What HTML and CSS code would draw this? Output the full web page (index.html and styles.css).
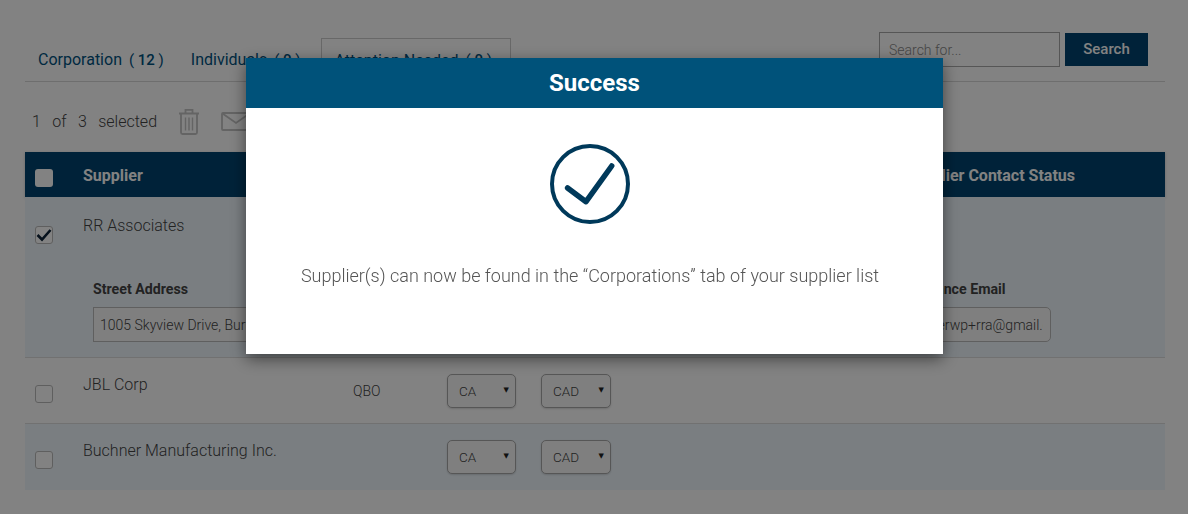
FILE: index.html
```html
<!DOCTYPE html>
<html lang="en">

<head>
    <meta charset="UTF-8">
    <meta name="viewport" content="width=device-width, initial-scale=1.0">
    <title>Suppliers</title>
    <link rel="stylesheet" href="styles.css">
</head>

<body>
    <div class="page">
        <div class="toolbar">
            <div class="tabs">
                <a class="tab">Corporation <span class="count">( <b>12</b> )</span></a>
                <a class="tab tab-second">Individuals <span class="count">( <b>0</b> )</span></a>
                <a class="tab tab-active">Attention Needed <span class="count">( <b>0</b> )</span></a>
            </div>
            <form class="search">
                <input type="text" class="search-input" placeholder="Search for...">
                <button type="button" class="search-btn">Search</button>
            </form>
        </div>

        <div class="selection">
            <span class="selection-text">1 of 3 selected</span>
            <svg class="icon-trash" width="22" height="27" viewBox="0 0 22 27" fill="none" stroke="#c4c4c4" stroke-width="1.800">
                <path d="M1 5.500h20M7.500 5V1.800h7V5M3 6v18.500a1.500 1.500 0 0 0 1.500 1.500h13a1.500 1.500 0 0 0 1.500-1.500V6"/>
                <path d="M7.500 9.500v13M11 9.500v13M14.500 9.500v13" stroke-width="1.400"/>
            </svg>
            <svg class="icon-mail" width="30" height="19" viewBox="0 0 30 19" fill="none" stroke="#c4c4c4" stroke-width="1.800">
                <rect x="1" y="1" width="28" height="17" rx="1"/>
                <path d="M1.500 1.500L15 11 28.500 1.500"/>
            </svg>
        </div>

        <div class="table-head">
            <span class="box"></span>
            <span class="head-title">Supplier</span>
            <span class="head-status">Supplier Contact Status</span>
        </div>

        <div class="row row-tint row-open">
            <div class="row-main">
                <span class="box box-checked">
                    <svg width="16" height="14" viewBox="0 0 16 14" fill="none" stroke="#0c2238" stroke-width="2.600">
                        <path d="M1.500 7l4.500 4.500L14.500 2"/>
                    </svg>
                </span>
                <span class="name">RR Associates</span>
            </div>
            <div class="details">
                <div class="field">
                    <label class="field-label">Street Address</label>
                    <input type="text" class="field-input field-address" value="1005 Skyview Drive, Burnaby, BC">
                </div>
                <div class="field">
                    <label class="field-label">Compliance Email</label>
                    <input type="text" class="field-input field-email" value="supplierwp+rra@gmail.com">
                </div>
            </div>
        </div>

        <div class="row">
            <div class="row-main">
                <span class="box"></span>
                <span class="name">JBL Corp</span>
                <span class="source">QBO</span>
                <div class="pick pick-country"><select><option>CA</option></select></div>
                <div class="pick pick-currency"><select><option>CAD</option></select></div>
            </div>
        </div>

        <div class="row row-tint">
            <div class="row-main">
                <span class="box"></span>
                <span class="name">Buchner Manufacturing Inc.</span>
                <span class="source"></span>
                <div class="pick pick-country"><select><option>CA</option></select></div>
                <div class="pick pick-currency"><select><option>CAD</option></select></div>
            </div>
        </div>
    </div>

    <div class="overlay">
        <div class="modal">
            <div class="modal-header">Success</div>
            <div class="modal-body">
                <svg class="modal-icon" width="80" height="80" viewBox="0 0 80 80" fill="none" stroke="#00395a">
                    <circle cx="40" cy="40" r="38" stroke-width="4"/>
                    <path d="M17.600 44L36 57.700 61.700 22" stroke-width="5.500" stroke-linecap="round" stroke-linejoin="round"/>
                </svg>
                <p class="modal-text">Supplier(s) can now be found in the “Corporations” tab of your supplier list</p>
            </div>
        </div>
    </div>
</body>

</html>
```

FILE: styles.css
```css
* {
    box-sizing: border-box;
}

body {
    font-family: Roboto, "Liberation Sans", sans-serif;
    margin: 0;
    padding: 0;
    background-color: #fff;
    color: #444;
    overflow: hidden;
}

.page {
    padding: 0 23px 0 25px;
}

/* top bar */
.toolbar {
    display: flex;
    justify-content: space-between;
    align-items: flex-start;
    padding-top: 32px;
    border-bottom: 1px solid #d8d8d8;
    height: 82px;
}

.tabs {
    display: flex;
    margin-top: 6px;
}

.tab {
    height: 43px;
    display: flex;
    align-items: center;
    padding: 0 14px 0 13px;
    font-size: 16px;
    color: #00527f;
    white-space: pre;
}

.tab-second {
    padding-right: 20px;
}

.tab-active {
    border: 1px solid #ccc;
    border-bottom: none;
    padding: 0 13px;
    width: 190px;
}

.count {
    margin-left: 3px;
    font-size: 15px;
}

.count b {
    font-weight: 500;
}

.search {
    display: flex;
    align-items: center;
    margin-right: 17px;
}

.search-input {
    width: 181px;
    height: 35px;
    border: 1px solid #aaa;
    padding: 0 9px;
    font-family: inherit;
    font-size: 14px;
    font-weight: 300;
    outline: none;
}

.search-input::placeholder {
    color: #888;
}

.search-btn {
    width: 83px;
    height: 33px;
    margin-left: 5px;
    padding: 0 0 2px;
    border: none;
    background-color: #004470;
    color: #fff;
    font-family: inherit;
    font-size: 15px;
    font-weight: 500;
}

/* selected count + actions */
.selection {
    height: 70px;
    display: flex;
    align-items: center;
    padding: 9px 0 0 7px;
    font-size: 16px;
    font-weight: 300;
}

.selection-text {
    word-spacing: 7.500px;
}

.icon-trash {
    margin-left: 21px;
}

.icon-mail {
    margin-left: 21px;
}

/* table */
.table-head {
    height: 45px;
    display: flex;
    align-items: center;
    padding: 2px 90px 0 10px;
    background-color: #004470;
    color: #fff;
    font-size: 16px;
    font-weight: 700;
    box-shadow: 0 1px 3px rgba(0, 0, 0, 0.2);
}

.head-title {
    margin-left: 30px;
}

.head-status {
    margin-left: auto;
}

.box {
    width: 18px;
    height: 18px;
    flex: none;
    background-color: #fff;
    border: 1px solid #bbb;
    border-radius: 3px;
    display: flex;
    align-items: center;
    justify-content: center;
}

.table-head .box {
    margin-top: 4px;
    border: none;
}

.row {
    height: 66px;
    border-bottom: 1px solid #ddd;
}

.row-tint {
    background-color: #f0f8fe;
}

.row:last-child {
    border-bottom: none;
}

.row-open {
    height: 161px;
}

.row-main {
    display: flex;
    align-items: flex-start;
    padding: 16px 0 0 10px;
}

.row-open .row-main {
    padding-top: 18px;
}

.row-main .box {
    margin-top: 11px;
}

.name {
    width: 270px;
    margin: 1px 0 0 30px;
    font-size: 16px;
    font-weight: 300;
    line-height: 20px;
    flex: none;
}

.source {
    width: 94px;
    flex: none;
    font-size: 14px;
    font-weight: 300;
    line-height: 34px;
}

.pick {
    position: relative;
    flex: none;
    height: 34px;
}

.pick-country {
    width: 69px;
    margin-right: 25px;
}

.pick-currency {
    width: 70px;
}

.pick select {
    appearance: none;
    width: 100%;
    height: 100%;
    padding: 0 0 0 11px;
    border: 1px solid #aaa;
    border-radius: 5px;
    background-color: #fafafa;
    color: #444;
    font-family: inherit;
    font-size: 13.500px;
    font-weight: 300;
    box-shadow: 0 1px 2px rgba(0, 0, 0, 0.15);
}

.pick::after {
    content: "▼";
    position: absolute;
    right: 7px;
    top: 12px;
    font-size: 7px;
    color: #222;
    font-family: "DejaVu Sans", sans-serif;
}

.details {
    display: flex;
    justify-content: space-between;
    padding: 0 114px 0 68px;
    margin-top: 36px;
}

.field-label {
    display: block;
    font-size: 14.200px;
    font-weight: 700;
    line-height: 18px;
    margin-bottom: 9px;
}

.field-input {
    height: 35px;
    border: 1px solid #bbb;
    padding: 0 6px;
    font-family: inherit;
    font-size: 14px;
    font-weight: 300;
    color: #444;
    background-color: #fafafa;
    outline: none;
}

.field-address {
    width: 230px;
}

.field-email {
    width: 160px;
    padding: 0 7px 0 9px;
    border-radius: 5px;
}

/* modal */
.overlay {
    position: fixed;
    top: 0;
    left: 0;
    right: 0;
    bottom: 0;
    background-color: rgba(0, 0, 0, 0.49);
    display: flex;
    justify-content: center;
    align-items: flex-start;
    padding: 58px 0 0 1px;
}

.modal {
    width: 697px;
    height: 296px;
    background-color: #fff;
    box-shadow: 0 5px 15px rgba(0, 0, 0, 0.5);
}

.modal-header {
    height: 50px;
    line-height: 50px;
    text-align: center;
    background-color: #00527a;
    color: #fff;
    font-size: 24px;
    font-weight: 700;
}

.modal-body {
    display: flex;
    flex-direction: column;
    align-items: center;
    padding: 36px 9px 0 0;
}

.modal-text {
    margin: 40px 0 0;
    font-size: 18px;
    font-weight: 300;
    line-height: 24px;
    color: #555;
}
```
